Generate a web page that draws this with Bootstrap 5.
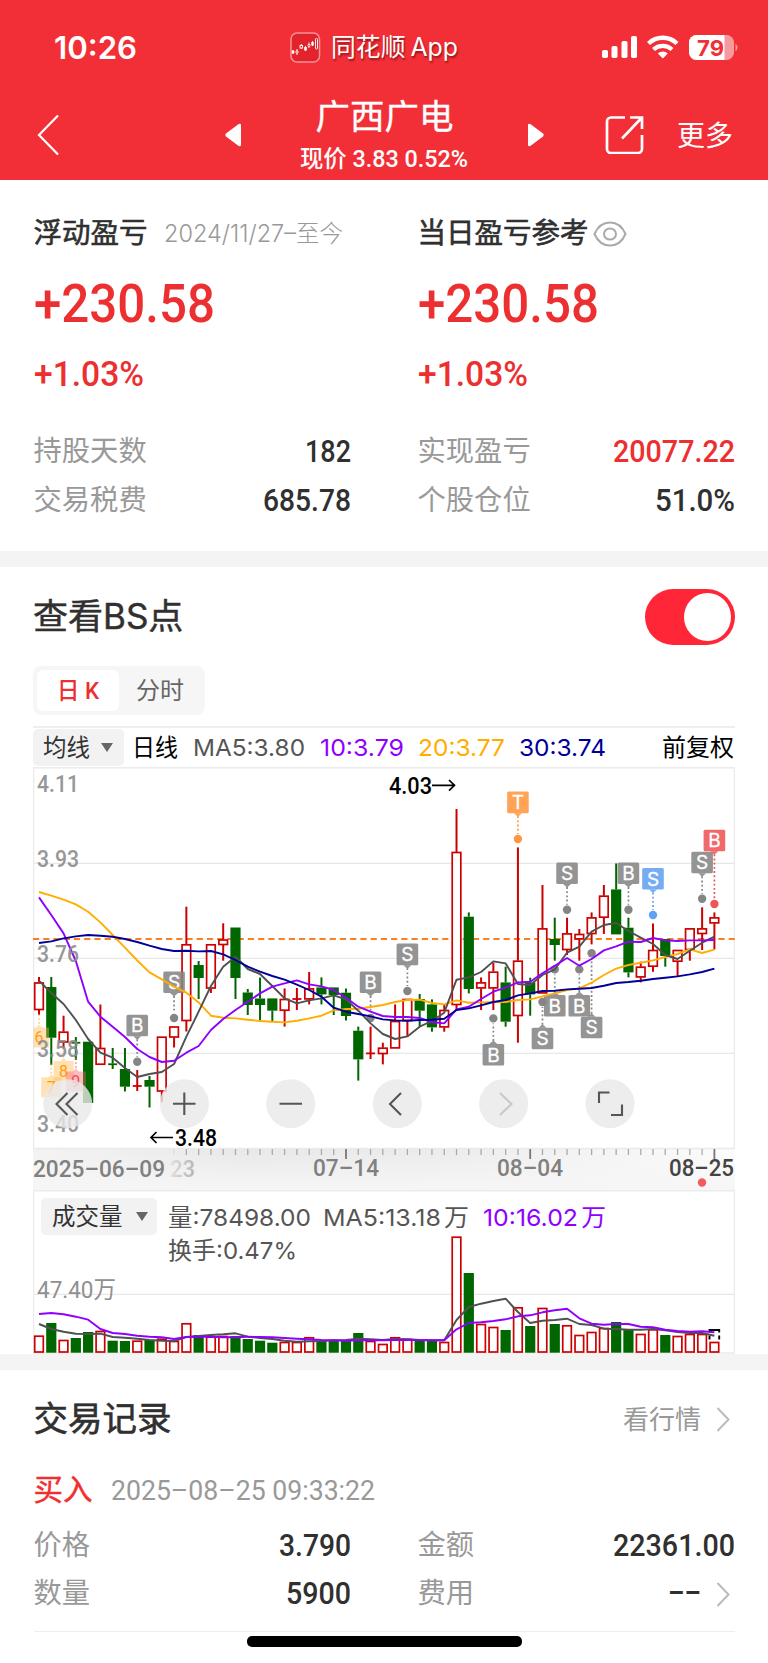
<!DOCTYPE html>
<html lang="zh-CN">
<head>
<meta charset="utf-8">
<meta name="viewport" content="width=device-width, initial-scale=1">
<title>广西广电</title>
<link href="https://cdn.jsdelivr.net/npm/bootstrap@5.3.0/dist/css/bootstrap.min.css" rel="stylesheet">
<style>
:root{--rd:#ec2f31;--ink:#303030;--dim:#999}
body{font-family:Roboto,"Noto Sans CJK SC",sans-serif;line-height:1;color:var(--ink);background:#fff;width:768px;height:1663px;overflow:hidden}
svg{display:block}
.inter{font-family:Inter,"Noto Sans CJK SC",sans-serif}
.fit{display:inline-block;white-space:nowrap;transform-origin:0 50%}
.top{background:#f22f37;height:180px;color:#fff}
.statusbar{height:94px;padding:0 30px 0 54px}
.clock{font-size:31px;font-weight:600}
.appname{font-size:25px;text-shadow:1px 2px 2px rgba(90,0,0,.6);font-family:Inter,"Noto Sans CJK SC",sans-serif}
.titlebar{height:82px;padding:0 35px 0 37px}
.stock{font-size:34.5px;height:47px;-webkit-text-stroke:.3px}
.quote{font-size:24px;font-weight:500;height:24px}
.more{font-size:28px;padding-top:3px}
.pad{padding-left:33px;padding-right:33px}
.pad.pad-text{padding-left:33.5px}
.pair{display:grid;grid-template-columns:317px 317px;column-gap:67px}
.sumhead{height:50px;font-size:28.5px}
.strong{-webkit-text-stroke:.6px}
.semi{-webkit-text-stroke:.45px}
.range{font-size:24px;color:var(--dim);font-weight:300}
.big{font-size:54px;height:56px;margin-top:18px;font-weight:500;color:var(--rd)}
.pct{font-size:35px;height:40px;margin:24px 0 31px;font-weight:500;color:var(--rd)}
.kv{height:48.5px;font-size:28.3px;color:var(--dim)}
.kv b{font-weight:500;font-size:30.5px;color:var(--ink)}
.gap-band{background:#f4f4f4;height:16px}
.h-title{font-size:35px}
.toggle{width:90px;height:56px;border-radius:28px;background:#ff2637;padding:4px 4px}
.toggle i{width:47px;height:48px;border-radius:50%;background:#fff}
.seg{width:172px;height:49px;border-radius:8px;background:#f6f6f6;padding:4px;font-size:24px;color:#666}
.seg .on{width:82px;height:41px;border-radius:6px;background:#fff;color:var(--rd);font-weight:500}
.seg .off{width:82px}
.legend{height:41px;border-top:2px solid #eee;font-size:23.5px;margin-top:11px;padding-right:1px}
.pick{background:#f2f2f2;border-radius:5px;height:37px;color:#333}
.tri{width:0;height:0;border:6.5px solid transparent;border-top:9px solid #666;border-bottom:0}
.volhead{left:8px;top:8px;font-size:23.5px;color:#555}
.rec{height:48px}
.home-bar{width:275px;height:10.5px;border-radius:5px;background:#000;margin:4px auto 0}
</style>
</head>
<body>
<header class="top">
  <div class="statusbar d-flex align-items-center position-relative">
    <span class="clock inter"><span class="fit" data-w="83">10:26</span></span>
    <div class="d-flex align-items-center" style="margin-left:153px">
      <svg width="31" height="31" viewBox="0 0 31 31"><rect x="1" y="1" width="28.500" height="29" rx="6" fill="#e3232b" stroke="#f69296" stroke-width="1.500"/><g fill="#fff" stroke="#fff" stroke-width=".9"><path d="M3 18v4M7 17v6M11.300 12v5M15.500 14v5M19 10.500v5.500M22.500 9v5"/><rect x="2.300" y="19" width="1.500" height="2"/><circle cx="7" cy="20" r="1.200" fill="#e3232b"/><rect x="10" y="13.500" width="2.600" height="2.500" fill="#e3232b"/><rect x="14.700" y="15.500" width="1.600" height="2.500"/><circle cx="19" cy="13.500" r="1.100" fill="#e3232b"/><rect x="21.800" y="10.500" width="1.400" height="2.500"/><rect x="25.500" y="6.500" width="2" height="10.500" rx=".8" fill="#e3232b"/></g></svg>
      <span class="appname" style="margin-left:10px"><span class="fit" data-w="127">同花顺<span style="margin-left:5px">App</span></span></span>
    </div>
    <svg class="ms-auto" width="137" height="30" viewBox="601 32 137 30"><g fill="#fff"><rect x="602" y="50" width="6" height="8" rx="1.800"/><rect x="611.500" y="46" width="6" height="12" rx="1.800"/><rect x="621.500" y="41" width="6" height="17" rx="1.800"/><rect x="631" y="36" width="6" height="22" rx="1.800"/></g>
      <g fill="none" stroke="#fff" stroke-width="4.300"><path d="M648.500 43.500a20.500 20.500 0 0 1 28.500 0"/><path d="M653.500 49.500a13.500 13.500 0 0 1 18.500 0"/></g><path d="M662.800 58.500l-5-5a7.500 7.500 0 0 1 10 0z" fill="#fff"/>
      <rect x="689" y="35" width="45" height="25" rx="7.500" fill="#f79a9e"/><path d="M696.500 35H724.500V60H696.500a7.500 7.500 0 0 1-7.500-7.500V42.500a7.500 7.500 0 0 1 7.500-7.500z" fill="#fff"/><path d="M735.500 43.500q4 4 0 8z" fill="#f79a9e"/><text x="697" y="55.500" font-family="Inter" font-size="22" font-weight="700" fill="#f22f37" textLength="27" lengthAdjust="spacingAndGlyphs">79</text></svg>
  </div>
  <div class="titlebar d-flex align-items-center">
    <svg width="23" height="42" viewBox="0 0 23 42"><path d="M21 1.500L2 21l19 19.500" fill="none" stroke="#fff" stroke-width="2.200"/></svg>
    <svg style="margin-left:164px" width="18" height="24" viewBox="0 0 18 24"><path d="M17 1.500v21q-1 1.500-3 0L2 13.500q-1.500-1.500 0-3L14 1.500q2-1.500 3 0z" fill="#fff"/></svg>
    <div class="flex-grow-1 text-center d-flex flex-column align-items-center"><div class="stock"><span class="fit" data-w="138">广西广电</span></div><div class="quote"><span class="fit" data-w="168">现价 3.83 0.52%</span></div></div>
    <svg width="18" height="24" viewBox="0 0 18 24"><path d="M1 1.500v21q1 1.500 3 0L16 13.500q1.500-1.500 0-3L4 1.500q-2-1.500-3 0z" fill="#fff"/></svg>
    <svg style="margin-left:60px" width="39" height="38" viewBox="605 116 39 38"><g fill="none" stroke="#fff" stroke-width="2.700"><path d="M625 117.500H611a4 4 0 0 0-4 4V149a4 4 0 0 0 4 4H638a4 4 0 0 0 4-4V135"/><path d="M630 117.500H642V129M642 117.500L622 138.500"/></g></svg>
    <span class="more" style="margin-left:33px">更多</span>
  </div>
</header>

<section class="pad pad-text pair" style="padding-top:29px;height:371px">
  <div>
    <div class="sumhead d-flex align-items-center"><span class="strong">浮动盈亏</span><span class="range" style="margin-left:16px"><span class="fit inter" data-w="179">2024/11/27–至今</span></span></div>
    <div class="big"><span class="fit" data-w="181">+230.58</span></div>
    <div class="pct"><span class="fit" data-w="110">+1.03%</span></div>
    <div class="kv d-flex align-items-center justify-content-between"><span>持股天数</span><b><span class="fit" data-w="46">182</span></b></div>
    <div class="kv d-flex align-items-center justify-content-between"><span>交易税费</span><b><span class="fit" data-w="88">685.78</span></b></div>
  </div>
  <div>
    <div class="sumhead d-flex align-items-center"><span class="strong">当日盈亏参考</span><svg style="margin-left:4px" width="34" height="26" viewBox="0 0 34 26"><g fill="none" stroke="#aaa" stroke-width="2"><path d="M1.500 13C5 5 11 1.500 17 1.500S29 5 32.500 13C29 21 23 24.500 17 24.500S5 21 1.500 13z"/><ellipse cx="17" cy="13" rx="6" ry="5.500"/></g></svg></div>
    <div class="big"><span class="fit" data-w="181">+230.58</span></div>
    <div class="pct"><span class="fit" data-w="110">+1.03%</span></div>
    <div class="kv d-flex align-items-center justify-content-between"><span>实现盈亏</span><b style="color:var(--rd)"><span class="fit" data-w="122">20077.22</span></b></div>
    <div class="kv d-flex align-items-center justify-content-between"><span>个股仓位</span><b><span class="fit" data-w="80">51.0%</span></b></div>
  </div>
</section>
<div class="gap-band"></div>

<section class="pad" style="height:787px">
  <div class="d-flex align-items-center justify-content-between" style="height:99px"><span class="h-title inter semi">查看BS点</span><span class="toggle d-flex justify-content-end"><i></i></span></div>
  <div class="seg d-flex align-items-center text-center"><span class="on d-flex align-items-center justify-content-center"><span class="fit" data-w="42">日 K</span></span><span class="off">分时</span></div>
  <div class="legend inter d-flex align-items-center">
    <span class="pick d-flex align-items-center" style="width:91px;padding-left:10px"><span>均线</span><i class="tri" style="margin-left:11px"></i></span>
    <span class="text-black" style="margin-left:8px"><span class="fit" data-w="46">日线</span></span>
    <span style="margin-left:15px;color:#555"><span class="fit" data-w="112">MA5:3.80</span></span>
    <span style="margin-left:15px;color:#9000ff"><span class="fit" data-w="84">10:3.79</span></span>
    <span style="margin-left:14px;color:#ffae00"><span class="fit" data-w="87">20:3.77</span></span>
    <span style="margin-left:14px;color:#000099"><span class="fit" data-w="87">30:3.74</span></span>
    <span class="ms-auto text-black" style="font-size:24px">前复权</span>
  </div>
  <svg id="price" width="702" height="423" viewBox="33 767 702 423" font-family="Roboto"></svg>
  <div class="position-relative">
    <svg id="volume" width="702" height="164" viewBox="33 1190 702 164" font-family="Roboto"></svg>
    <div class="volhead inter position-absolute d-flex">
      <span class="pick d-flex align-items-center" style="width:116px;padding-left:11px"><span>成交量</span><i class="tri" style="margin-left:13px"></i></span>
      <div style="margin-left:11px;padding-top:8px">
        <div class="d-flex"><span class="fit" data-w="143">量:78498.00</span><span class="fit" style="margin-left:12px" data-w="146">MA5:13.18<span style="margin-left:3px">万</span></span><span class="fit" style="margin-left:14px;color:#9000ff" data-w="123">10:16.02<span style="margin-left:3px">万</span></span></div>
        <div style="margin-top:9px"><span class="fit" data-w="129">换手:0.47%</span></div>
      </div>
    </div>
  </div>
</section>
<div class="gap-band"></div>

<section class="pad pad-text">
  <div class="d-flex align-items-center" style="height:99px"><span class="strong" style="font-size:34.500px">交易记录</span><span class="ms-auto" style="font-size:26px;color:var(--dim)">看行情</span><svg style="margin:0 5px 0 15px" width="14" height="25" viewBox="0 0 14 25"><path d="M1.500 1L12.500 12.500L1.500 24" fill="none" stroke="#bbb" stroke-width="2"/></svg></div>
  <div class="d-flex align-items-center" style="height:44px"><span class="semi" style="font-size:29.500px;color:#f22f2f">买入</span><span style="margin-left:18px;font-size:27.500px;color:var(--dim)"><span class="fit" data-w="264">2025–08–25 09:33:22</span></span></div>
  <div class="pair" style="padding-top:9px">
    <div class="kv rec d-flex align-items-center justify-content-between"><span>价格</span><b><span class="fit" data-w="72">3.790</span></b></div>
    <div class="kv rec d-flex align-items-center justify-content-between"><span>金额</span><b><span class="fit" data-w="122">22361.00</span></b></div>
    <div class="kv rec d-flex align-items-center justify-content-between"><span>数量</span><b><span class="fit" data-w="65">5900</span></b></div>
    <div class="kv rec d-flex align-items-center"><span>费用</span><b class="ms-auto"><span class="fit" data-w="33">––</span></b><svg style="margin:0 5px 0 15px" width="14" height="25" viewBox="0 0 14 25"><path d="M1.500 1L12.500 12.500L1.500 24" fill="none" stroke="#bbb" stroke-width="2"/></svg></div>
  </div>
  <div style="height:14px;border-bottom:1px solid #eee"></div>
</section>
<div class="home-bar"></div>

<script src="https://cdn.jsdelivr.net/npm/bootstrap@5.3.0/dist/js/bootstrap.bundle.min.js"></script>
<script>
document.querySelectorAll('.fit').forEach(function(e){
  var n=e.getBoundingClientRect().width,w=+e.dataset.w;
  e.style.transform='scaleX('+w/n+')';
  e.style.width=w+'px';
});
var X=function(i){return +(39+12.28*i).toFixed(2)};
var RED='#cc0000',GRN='#006600';
// kind, high, body top, body bottom, low
var K=`r 977 982.5 1010 1015|g 977 987 1037.7 1065|r 1015.7 1031.7 1042.5 1048|g 1037 1042 1043.5 1060|g 1041.7 1041.7 1103 1103|r 1004.5 1048 1064.7 1064.7|g 1048 1063.5 1065 1069|g 1048 1069 1086.7 1091.5|r 1070 1086 1086 1091|g 1076 1080 1086.7 1107.5|r 1036.7 1036.7 1091.5 1102|r 1026.5 1026.5 1037.5 1047.5|r 906.7 944.3 1021 1031.5|g 961 965 978 999|r 944.3 944.3 988.5 993|r 923.3 939.5 945 960.7|g 927.5 927.5 978 999|g 989 992.5 1005 1015|g 977.5 998.5 1005 1020.5|g 998.4 998.4 1010.7 1021|r 988.4 999 1010.7 1026.6|r 988 999 999 1010|r 972 988.4 999.4 1004.4|g 977.4 987.4 994.4 1004.4|g 987.4 987.4 995 1015|g 988.4 992.7 1016 1020.6|g 1026.6 1030.7 1059.4 1080.6|r 1026.6 1053.4 1053.4 1059|r 1042.7 1047.7 1054 1064.4|r 1004.4 1021 1048.4 1048.4|r 999 999 1021 1036.7|g 994 999 1010.7 1026.7|g 999.4 1004.4 1027.4 1031.7|r 1005 1010 1027.4 1031.7|r 809 852 1005 1010|g 912.4 916.7 989 993.4|r 977.4 982.4 988.4 1010|r 962.7 971.7 988.4 1010|g 966.7 982.4 1021.7 1026.7|r 847.4 960.7 1016 1042.7|g 977.7 982.4 994.4 1015.7|r 885 928.4 993.4 993.4|g 917.7 939 945 960.7|r 917.7 933.4 950 955|r 929 934 939.4 960.7|r 912.4 917.4 934 944.4|r 885 895.7 917.7 934|g 863.4 889.4 934.4 934.4|g 917.7 927.7 972.4 977.4|r 961.7 966.7 977.4 982.4|r 923.4 950 966.7 971.7|g 939 939 956 966.7|r 950 950 961.7 976.7|r 928.4 928.4 950 960.7|r 907.4 928.4 934 950|r 912.4 917.4 923.4 949.4`.split('|').map(function(s){return s.split(' ')});
var MA={
'#ffae00':'892 895.7 899.7 904.4 911.7 922.4 935 947.7 960.5 972.4 979.4 986.7 992.7 1002.4 1015.7 1017.7 1018.4 1019.7 1021 1021.7 1022.4 1020.7 1018.4 1015.7 1010.4 1009 1008.7 1007 1005 1002 1000 999.7 1003 1004.4 1000.4 1002.7 1002.4 1002 1002 1000 999.4 996.4 993.4 990 988.4 982.7 975 968.7 965 962.7 960.4 957 954 949.4 953 949.7',
'#505050':'980.7 993 1004 1020 1039 1052.7 1057.7 1068 1077 1074 1072 1064 1036.7 1011.7 986 966.7 956.7 969 974 986 998.4 1003.4 1000.4 998.4 995.4 999.4 1010.7 1023.4 1034 1039 1036.4 1026.7 1021 1012.7 979.7 977.4 972 961.4 963.4 984 985 975 969.4 952.7 946.7 931.7 925 923 931 937.7 944 955 959 950.7 942.7 936.7',
'#9000ff':'897.4 915 933.4 961 1001.7 1016.7 1026.7 1037 1049 1057 1062 1060.7 1052.7 1046 1030 1019 1010 1001.7 993.4 986.7 983.4 980.4 984.4 986.4 990 997.7 1006.7 1011.7 1016 1017 1017 1018 1022 1023.4 1009.4 1006.7 999 991.7 987.7 982.4 981.7 973.4 965.7 958 965.7 959 950.4 946.4 941.7 942 938 940.4 941 940.4 940.4 940',
'#000099':'943 941.4 938.4 936.4 935 935.7 936.7 939 942 945.7 949 951 950.7 951.4 951 954.4 960 966.7 971.7 976 979.7 984.7 990 996.7 1007.7 1011.7 1014 1016.4 1019.4 1020.4 1020.7 1020 1019.7 1018.7 1010 1008.4 1005.4 1002 1000 995.4 993.4 991 990.7 989.4 988.7 988 985.7 983 982 980.7 979 977.7 976.4 974.4 972 968.7'};
function poly(str,c){return '<polyline fill="none" stroke="'+c+'" stroke-width="1.9" stroke-linejoin="round" points="'+str.split(' ').map(function(y,i){return X(i)+','+y}).join(' ')+'"/>'}
function line(x1,y1,x2,y2,c,w,extra){return '<line x1="'+x1+'" y1="'+y1+'" x2="'+x2+'" y2="'+y2+'" stroke="'+c+'" stroke-width="'+w+'" '+(extra||'')+'/>'}
function text(x,y,s,len,size,c,w,extra){return '<text x="'+x+'" y="'+y+'" font-size="'+size+'" font-weight="'+w+'" fill="'+c+'" textLength="'+len+'" lengthAdjust="spacingAndGlyphs" '+(extra||'')+'>'+s+'</text>'}

var h='<defs><linearGradient id="ax" x1="0" x2="1"><stop offset="0" stop-color="#f3f3f3"/><stop offset=".3" stop-color="#e8e8e8"/><stop offset=".6" stop-color="#ececec"/><stop offset="1" stop-color="#fcfcfc"/></linearGradient><linearGradient id="fade" x1="0" x2="0" y1="0" y2="1"><stop offset="0" stop-color="#f6f6f6" stop-opacity="0"/><stop offset="1" stop-color="#f6f6f6"/></linearGradient><linearGradient id="d23" x1="0" x2="1"><stop offset="0" stop-color="#e0e0e0"/><stop offset="1" stop-color="#b4b4b4"/></linearGradient></defs>';
h+='<rect x="33" y="1149" width="702" height="41" fill="url(#ax)"/><rect x="33" y="1149" width="702" height="41" fill="url(#fade)"/>';
h+='<rect x="33.500" y="767.800" width="701" height="380.700" fill="#fff" stroke="#ebebeb" stroke-width="1.600"/>';
[863.4,958.4,1053.4].forEach(function(y){h+=line(33,y,735,y,'#e8e8e8',1.2)});
h+=line(33,939,735,939,'#ff7f1e',1.9,'stroke-dasharray="6.200 4.030"');
K.forEach(function(k,i){var x=X(i),c=k[0]=='r'?RED:GRN,t=+k[2],b=+k[3];
  if(+k[1]<t)h+=line(x,k[1],x,t,c,2);
  if(+k[4]>b)h+=line(x,b,x,k[4],c,2);
  if(b-t<2)h+=line(x-4.5,(t+b)/2,x+4.5,(t+b)/2,c,1.8);
  else if(k[0]=='r')h+='<rect x="'+(x-4.3)+'" y="'+(t+.5)+'" width="8.600" height="'+(b-t-1)+'" fill="#fff" stroke="'+c+'" stroke-width="1.700"/>';
  else h+='<rect x="'+(x-5.1)+'" y="'+t+'" width="10.200" height="'+(b-t)+'" fill="'+c+'"/>';
});
// signal tags: index, letter, tag centre, dot, colour
[[8,'B',1025.5,1061.7],[11,'S',982.3,1018],[27,'B',982.3,1018],[30,'S',954.4,991],[37,'B',1054.8,1018.4],[39,'T',802.4,839,'#ff9640'],[43,'S',873.2,909.7],[48,'B',873.2,909.7],[50,'S',878.7,915,'#62a0f2'],[54,'S',862.5,898.7],[41,'S',1038.5,1002],[42,'B',1005.8,969.4],[44,'B',1005.8,969.4],[45,'S',1027.5,953.3],[55,'B',840.5,904,'#ee5558']].forEach(function(m){
  var x=X(m[0]),c=m[4]||'#858585',d=m[2]<m[3]?1:-1,e=m[2]+d*10.8;
  h+=line(x,e+d*3,x,m[3]-d*5,c,1.7,'stroke-dasharray="1.900 2.300"')+'<circle cx="'+x+'" cy="'+m[3]+'" r="4.200" fill="'+c+'"/>'
  +'<g fill="'+c+'" fill-opacity=".88"><path d="M'+(x-9.3)+' '+(m[2]-10.8)+'h18.600q1.500 0 1.500 1.500v18.600q0 1.500-1.500 1.500h-18.600q-1.500 0-1.500-1.500v-18.600q0-1.500 1.500-1.500z"/><path d="M'+(x-4)+' '+e+'l4 '+d*3.5+'l4 '+-d*3.5+'z"/></g>'
  +'<text x="'+x+'" y="'+(m[2]+6.8)+'" text-anchor="middle" font-family="Inter" font-size="19" font-weight="400" fill="#fff" stroke="#fff" stroke-width=".3">'+m[1]+'</text>';
});
for(var c in MA)h+=poly(MA[c],c);
// sequence flags
[[0,'6',1037,'#ffb84a'],[1,'7',1086.7,'#ffb84a'],[2,'8',1070.5,'#ffb84a'],[3,'9',1081,'#f4646c']].forEach(function(m){var x=X(m[0]),l=Math.max(x-10,33.5);
  h+=line(x,m[2]-23,x,m[2]-12,m[3],1.6,'stroke-dasharray="2 2" stroke-opacity=".6"')+'<path d="M'+l+' '+(m[2]-9.5)+'H'+(x-3)+'l3-3l3 3H'+(x+10)+'v20H'+l+'z" fill="'+m[3]+'" fill-opacity=".42"/><text x="'+x+'" y="'+(m[2]+6)+'" text-anchor="middle" font-size="16" fill="'+(m[0]==3?'#ee4a54':'#ff9c10')+'">'+m[1]+'</text>'});
[['4.11',792],['3.93',867],['3.76',962],['3.58',1057],['3.40',1131.5]].forEach(function(a){h+=text(37,a[1],a[0],42,24.5,'#8c8c8c',500,'opacity=".9"')});
h+=text(389,794,'4.03',43,24,'#000',500)+'<path d="M432 785.300h22M449 780l5.500 5.300l-5.500 5.300" fill="none" stroke="#000" stroke-width="1.700"/>';
h+=text(175,1145.500,'3.48',42,23,'#000',500)+'<path d="M173 1137.500h-22M156.500 1132l-5.500 5.500l5.500 5.500" fill="none" stroke="#000" stroke-width="1.700"/>';
[67.7,184.3,290.7,397.3,503.7,610].forEach(function(x){h+='<circle cx="'+x+'" cy="1103.700" r="24.500" fill="#e8e8e8" fill-opacity=".8"/>'});
h+='<g fill="none" stroke="#555" stroke-width="2.100"><path d="M67.500 1093l-11 11l11 11M77.500 1093l-11 11l11 11M173 1103.700h22.500M184.300 1092.500v22.500M279.500 1103.700h22.500M401 1093l-11 11l11 11"/><path d="M500 1093l11.500 11l-11.500 11" stroke="#c8c8c8"/><path d="M599 1103v-10.500h10.500M611 1115h11v-10.500"/></g>';
for(var i=11;i<56;i++){var M=i==25||i==40||i==55;h+=line(X(i),1149,X(i),M?1159:1155,M?'#777':i==11?'#ddd':'#aaa',M?1.8:1.3)}
h+=text(33,1176.500,'2025–06–09',132,23.5,'#808080',500)+text(170,1176.500,'23',25,23.5,'url(#d23)',500)+text(313,1176,'07–14',66,23.5,'#808080',500)+text(497,1176,'08–04',66,23.5,'#808080',500)+text(669,1176,'08–25',65,23.5,'#444',500);
h+='<circle cx="702" cy="1182.500" r="4.200" fill="#f25c60"/>';
document.getElementById('price').innerHTML=h;

var V='1335.7 1323 1340 1338 1332 1331 1340.7 1341 1340.7 1340 1338.7 1341 1323.3 1335 1336.7 1336 1336 1339 1340.7 1342.7 1342 1342 1337.3 1341 1340 1341 1333 1341 1344 1337.3 1339 1341 1341 1342 1236.7 1273 1324 1327 1330 1307.3 1326 1308 1324 1325.3 1335 1332 1328 1322 1330 1334 1329.3 1335 1336 1334 1334 1342'.split(' ');
var v='<rect x="33.500" y="1190.700" width="701" height="162.300" fill="#fff" stroke="#ebebeb" stroke-width="1.500"/>'+line(33,1294.3,735,1294.3,'#e8e8e8',1.2);
V.forEach(function(y,i){var x=X(i);y=+y;
  if(K[i][0]=='r')v+='<rect x="'+(x-4.3)+'" y="'+(y+.5)+'" width="8.600" height="'+(1351.5-y)+'" fill="#fff" stroke="'+RED+'" stroke-width="1.700"/>';
  else v+='<rect x="'+(x-5.1)+'" y="'+y+'" width="10.200" height="'+(1352.7-y)+'" fill="'+GRN+'"/>'});
v+='<path d="M709.500 1332.500v-2.500h9.700v2.500M709.500 1335.500v4M719.200 1335.500v4" fill="none" stroke="#000" stroke-width="1.900"/>';
v+=poly('1324 1329 1331.7 1333.7 1334 1333.7 1337 1337.7 1338.7 1340 1340.7 1341 1337 1336 1335 1334.3 1333.3 1336.7 1338 1339 1340.7 1341.7 1341.3 1341 1340.3 1340 1338.7 1339.3 1340 1339 1339.3 1340 1340.3 1340.3 1320 1307 1303.7 1301 1298.7 1312 1323 1320.7 1320 1318.7 1324 1325 1328.7 1329 1329.7 1329.7 1329 1330.3 1332 1333 1333 1335.7','#505050');
v+=poly('1314 1313 1314.3 1316.7 1319.7 1329 1333 1334 1335.7 1336.7 1337.3 1339 1337 1336.7 1336.7 1337.3 1337.3 1336.7 1337 1337.3 1338 1338.7 1339.3 1340 1340.3 1340.7 1340.3 1340.3 1340.3 1340 1340 1340 1340.3 1340.3 1329.3 1323 1322.3 1321 1319.3 1316.3 1315.3 1312.3 1310.3 1308.7 1318.3 1323.7 1324.7 1324 1324 1326.7 1327.3 1329.7 1331 1331.7 1331.3 1332.3','#9000ff');
v+=text(37,1298,'47.40万',79,24,'#909090',400,'style="font-family:Roboto,\'Noto Sans CJK SC\',sans-serif"');
document.getElementById('volume').innerHTML=v;
</script>
</body>
</html>
